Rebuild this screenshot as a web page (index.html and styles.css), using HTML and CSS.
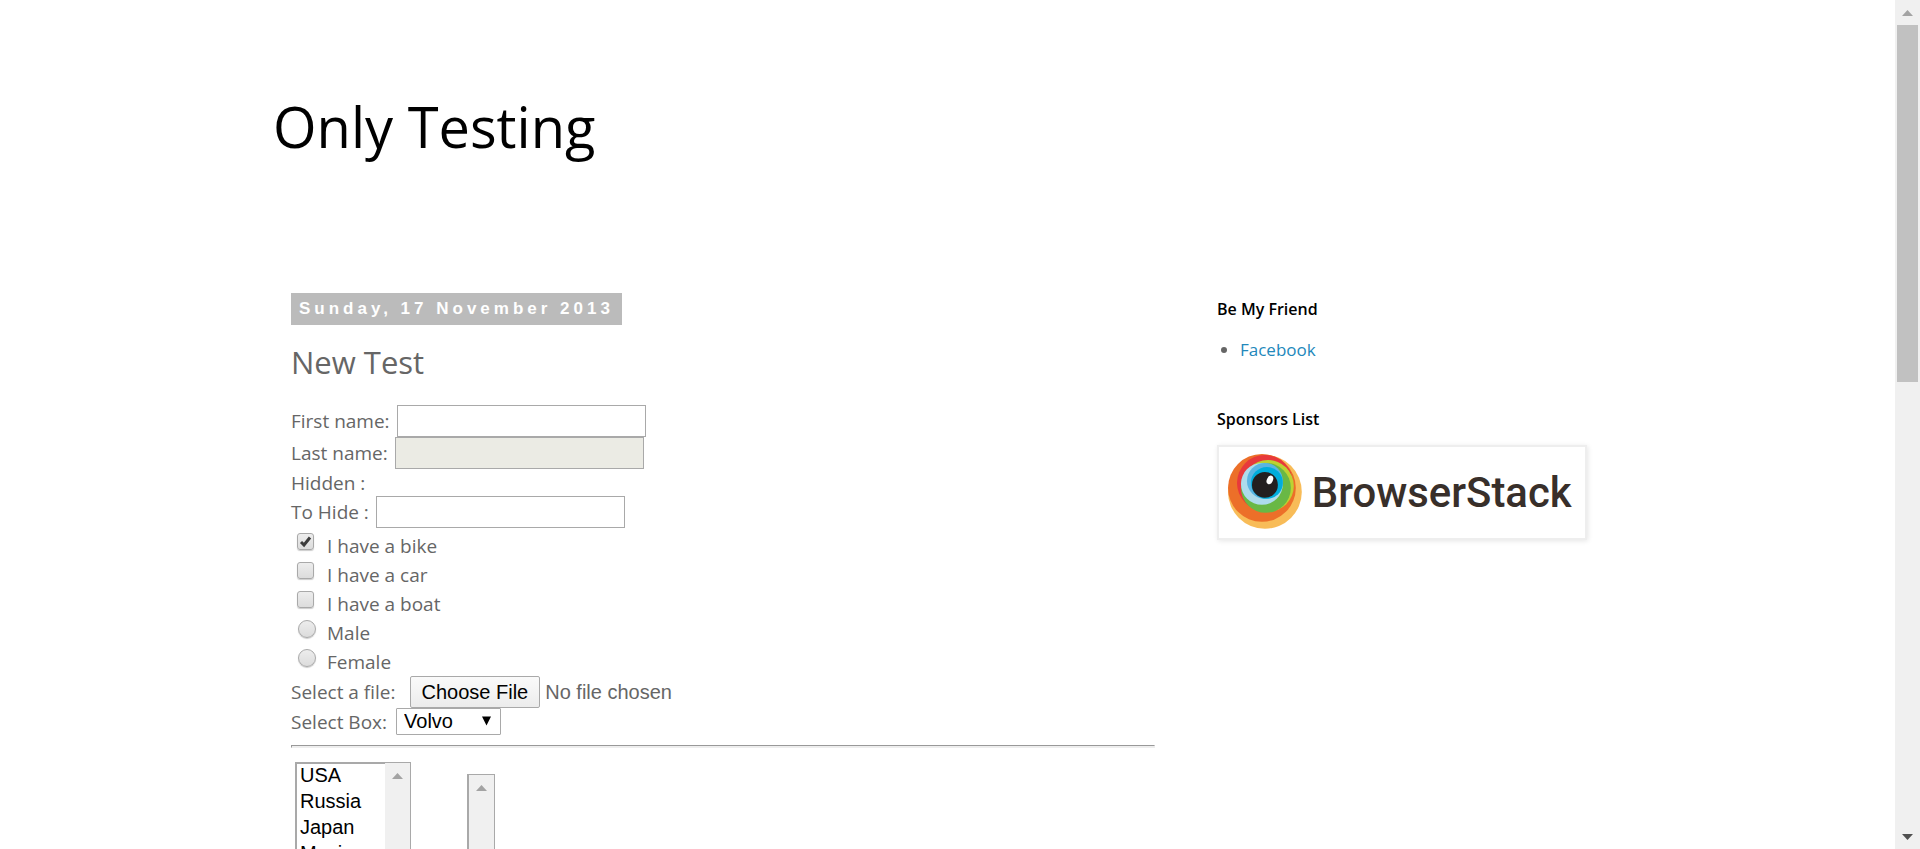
FILE: index.html
```html
<!DOCTYPE html>
<html lang="en">
<head>
<meta charset="utf-8">
<title>Only Testing</title>
<link rel="stylesheet" href="styles.css">
</head>
<body>
<div class="viewport">
  <div class="page">
    <header class="header"><h1 class="title">Only Testing</h1></header>
    <div class="columns">
      <main class="main">
        <h2 class="date">Sunday, 17 November 2013</h2>
        <h3 class="post-title">New Test</h3>
        <form class="form">
          <div class="row"><label for="fname">First name:</label><input class="text" type="text" id="fname"></div>
          <div class="row"><label for="lname">Last name:</label><input class="text" type="text" id="lname" disabled></div>
          <div class="row hidden-row">Hidden :</div>
          <div class="row"><label for="tohide">To Hide :</label><input class="text" type="text" id="tohide"></div>
          <div class="choices">
            <div class="row choice"><span class="tick"><input class="check" type="checkbox" id="bike" checked><svg class="mark" viewBox="0 0 17 17"><path d="M4 9 7 12 13 4.5" fill="none" stroke="#3c3c3c" stroke-width="3"/></svg></span><label for="bike">I have a bike</label></div>
            <div class="row choice"><span class="tick"><input class="check" type="checkbox" id="car"></span><label for="car">I have a car</label></div>
            <div class="row choice"><span class="tick"><input class="check" type="checkbox" id="boat"></span><label for="boat">I have a boat</label></div>
            <div class="row choice"><span class="tick"><input class="check radio" type="radio" name="gender" id="male"></span><label for="male">Male</label></div>
            <div class="row choice"><span class="tick"><input class="check radio" type="radio" name="gender" id="female"></span><label for="female">Female</label></div>
          </div>
          <div class="row file-row"><label for="file">Select a file:</label><input class="file" type="file" id="file"></div>
          <div class="row select-row"><label for="cars">Select Box:</label><span class="drop"><select class="select" id="cars"><option>Volvo</option><option>Saab</option><option>Opel</option><option>Audi</option></select><svg class="caret" viewBox="0 0 10 10"><path d="M0 0H10L5 10Z"/></svg></span></div>
          <hr class="rule">
          <div class="lists">
            <div class="listbox">
              <select class="list" multiple aria-label="Countries"><option>USA</option><option>Russia</option><option>Japan</option><option>Mexico</option><option>India</option><option>Malaysia</option><option>Greece</option></select>
              <div class="track"><svg class="arrow" viewBox="0 0 11 6"><path d="M5.5 0 11 6H0Z"/></svg></div>
            </div>
            <div class="listbox second">
              <select class="list empty" multiple aria-label="Chosen countries"></select>
              <div class="track"><svg class="arrow" viewBox="0 0 11 6"><path d="M5.5 0 11 6H0Z"/></svg></div>
            </div>
          </div>
        </form>
      </main>
      <aside class="side">
        <h2 class="side-title">Be My Friend</h2>
        <ul class="links"><li><a class="link" href="#">Facebook</a></li></ul>
        <h2 class="side-title">Sponsors List</h2>
        <a class="sponsor" href="#" aria-label="BrowserStack">
          <svg class="logo" viewBox="2 2 361 85">
            <circle cx="45" cy="44" r="37" fill="#f8bc58"/>
            <circle cx="42" cy="40" r="34" fill="#ec6f29"/>
            <circle cx="45" cy="35" r="28" fill="#e8393b"/>
            <circle cx="48" cy="38" r="26" fill="#bdd232"/>
            <circle cx="46" cy="40" r="25" fill="#69b845"/>
            <circle cx="42" cy="36" r="21" fill="#aedceb"/>
            <circle cx="45" cy="33" r="18" fill="#5ab5e2"/>
            <circle cx="47" cy="35" r="16" fill="#00addc"/>
            <circle cx="45" cy="37" r="13" fill="#231f20"/>
            <ellipse cx="50" cy="32" rx="3" ry="4.5" fill="#fff" transform="rotate(25 50 32)"/>
            <text class="brand" x="92" y="59">BrowserStack</text>
          </svg>
        </a>
      </aside>
    </div>
  </div>
</div>
<div class="scrollbar">
  <button class="step" type="button" aria-label="Scroll up"><svg class="arrow" viewBox="0 0 11 6"><path d="M5.5 0 11 6H0Z"/></svg></button>
  <div class="thumb"></div>
  <button class="step" type="button" aria-label="Scroll down"><svg class="arrow down" viewBox="0 0 11 6"><path d="M0 0H11L5.5 6Z"/></svg></button>
</div>
</body>
</html>
```
FILE: styles.css
```css
* { box-sizing: border-box; }
body {
  margin: 0;
  height: 100vh;
  display: flex;
  overflow: hidden;
  background: #fff;
  color: #666;
  font: 19px/30px "Trebuchet MS", "Open Sans", sans-serif;
}
.viewport { flex: 1; min-width: 0; overflow: hidden; }
.page { max-width: 1349px; margin: 0 auto; }
.header { padding: 84px 0 0; height: 293px; }
.title { margin: 0; font-size: 56px; line-height: 84px; font-weight: 400; color: #000; }
.columns { display: flex; gap: 62px; padding: 0 35px 0 18px; }
.main { flex: 1; min-width: 0; }
.side { width: 370px; }
.date {
  width: fit-content;
  margin: 0;
  padding: 0 8px;
  background: #bbb;
  color: #fff;
  font: bold 17px/32px "Liberation Sans", Arial, sans-serif;
  letter-spacing: 4px;
}
.post-title { margin: 16px 0 22px; font-size: 31px; line-height: 42px; font-weight: 400; }
.row { display: flex; align-items: center; gap: 7px; height: 32px; }
.hidden-row { height: 27px; }
.text {
  width: 249px;
  height: 32px;
  padding: 2px;
  border: 1px solid #a9a9a9;
  background: #fff;
  font: 20px "Liberation Sans", Arial, sans-serif;
}
.text:disabled { background: #ebebe4; }
.choices { padding-top: 3px; }
.choice { height: 29px; gap: 8px; }
.tick { position: relative; align-self: flex-start; width: 28px; padding: 2px 0 0 6px; }
.check {
  appearance: none;
  display: block;
  width: 17px;
  height: 17px;
  margin: 0;
  border: 1px solid #a9a9a9;
  border-radius: 3px;
  background: linear-gradient(#ededed, #dcdcdc);
  box-shadow: 0 1px 1px #ccc;
}
.radio { width: 18px; height: 18px; margin-left: 1px; border-radius: 50%; }
.mark { position: absolute; left: 6px; top: 2px; width: 17px; height: 17px; pointer-events: none; }
.file-row { gap: 14px; }
.file { width: 300px; height: 32px; color: #666; font: 20px/30px "Liberation Sans", Arial, sans-serif; }
.file::file-selector-button {
  height: 32px;
  margin: 0 5px 0 0;
  padding: 0 11px;
  border: 1px solid #a9a9a9;
  border-radius: 2px;
  background: linear-gradient(#fafafa, #ececec);
  color: #000;
  font: 20px/28px "Liberation Sans", Arial, sans-serif;
}
.select-row { height: 27px; gap: 9px; }
.drop { position: relative; height: 27px; }
.select {
  appearance: none;
  display: block;
  width: 105px;
  height: 27px;
  padding: 0 7px;
  border: 1px solid #a9a9a9;
  border-radius: 1px;
  background: #fff;
  color: #000;
  font: 20px/25px "Liberation Sans", Arial, sans-serif;
}
.caret { position: absolute; right: 10px; top: 8px; width: 9px; height: 10px; pointer-events: none; }
.rule { margin: 10px 0 14px; height: 3px; border: 1px solid #eee; border-top-color: #999; border-left-color: #999; background: #eee; }
.lists { display: flex; gap: 56px; padding-left: 4px; }
.listbox { display: flex; height: 108px; border: 1px solid #a9a9a9; border-left-width: 2px; overflow: hidden; }
.second { margin-top: 12px; }
.list {
  width: 88px;
  height: 200px;
  margin: 0;
  padding: 0;
  border: 0;
  border-top: 1px solid #a9a9a9;
  border-radius: 0;
  outline: 0;
  overflow: hidden;
  color: #000;
  font: 20px "Liberation Sans", Arial, sans-serif;
}
.list option { height: 26px; min-height: 26px; padding: 0 3px 6px; line-height: 20px; color: #000; }
.list.empty { width: 0; }
.track { width: 25px; padding-top: 10px; background: #f0f0f0; display: flex; justify-content: center; }
.arrow { display: block; width: 11px; height: 6px; fill: #a3a3a3; }
.side-title { margin: 0; font-size: 16px; line-height: 32px; font-weight: 600; color: #000; }
.links { margin: 10px 0 38px; padding: 0 0 0 23px; font-size: 17px; }
.link { color: #2288bb; text-decoration: none; }
.sponsor { display: block; margin-top: 10px; border: 2px solid #eee; padding: 3px; box-shadow: 1px 1px 5px rgba(0, 0, 0, .1); }
.logo { display: block; width: 100%; }
.brand { font: 500 42px Roboto, sans-serif; fill: #382f2a; }
.scrollbar { width: 25px; display: flex; flex-direction: column; background: #f0f0f0; }
.step { display: flex; align-items: center; justify-content: center; width: 25px; height: 25px; padding: 0; border: 0; background: #f0f0f0; }
.thumb { height: 42.1vh; margin: 0 2px auto; background: #c1c1c1; }
.down { fill: #505050; }
```
